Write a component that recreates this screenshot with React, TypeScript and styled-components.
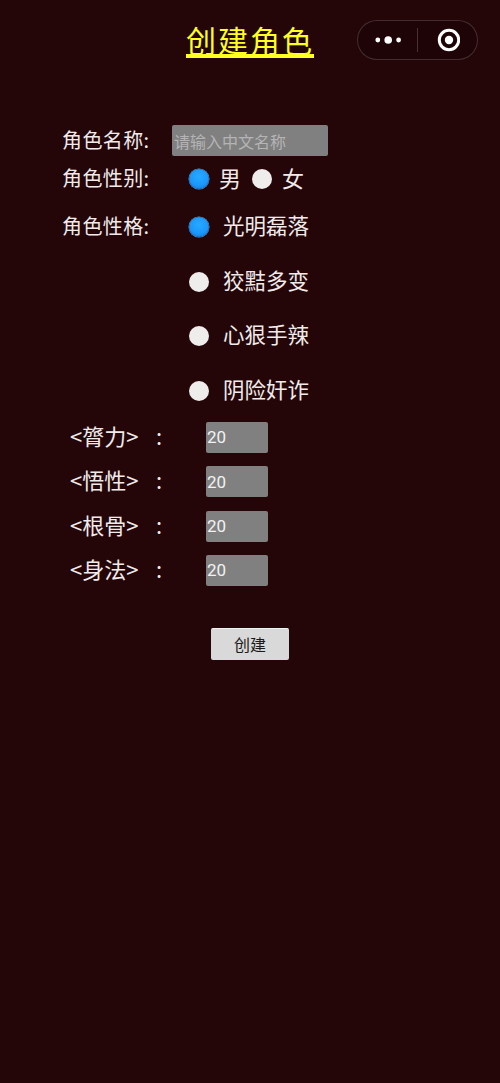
import React from "react";
import styled, { createGlobalStyle } from "styled-components";

const Global = createGlobalStyle`
  html, body { margin: 0; padding: 0; background: #240508; }
  * { box-sizing: border-box; }
  #root { font-family: "Noto Sans CJK SC", "Noto Sans", sans-serif; }
`;

const Page = styled.div`
  position: relative;
  width: 500px;
  height: 1083px;
  background: #240508;
  color: #f0ebea;
  overflow: hidden;
`;

const Title = styled.h1`
  margin: 0;
  height: 125px;
  padding-top: 16px;
  text-align: center;
  font-size: 30px;
  letter-spacing: 2px;
  line-height: 46px;
  font-weight: 400;
  color: #ffff22;
  text-decoration: underline;
  text-decoration-thickness: 4px;
  text-underline-offset: 2px;
`;

const Capsule = styled.div`
  position: absolute;
  top: 20px;
  left: 357px;
  width: 121px;
  height: 40px;
  border-radius: 20px;
  border: 1px solid rgba(255, 255, 255, 0.16);
  background: rgba(0, 0, 0, 0.12);
  display: flex;
  align-items: center;
`;

const CapsuleCell = styled.div`
  flex: 1;
  display: flex;
  align-items: center;
  justify-content: center;
`;

const CapsuleDivider = styled.div`
  width: 1px;
  height: 24px;
  background: rgba(255, 255, 255, 0.18);
`;

const Form = styled.form`
  display: flex;
  flex-direction: column;
  padding-left: 62px;
`;

const Row = styled.div<{ $top?: number; $height?: number }>`
  display: flex;
  align-items: center;
  height: ${(p) => p.$height ?? 32}px;
  margin-top: ${(p) => p.$top ?? 0}px;
`;

const FieldLabel = styled.label`
  width: 110px;
  flex: none;
  font-size: 20px;
  letter-spacing: 0.4px;
  line-height: 26px;
  padding-bottom: 2px;
  white-space: nowrap;
`;

const NameInput = styled.input`
  width: 156px;
  height: 31px;
  border: 0;
  border-radius: 2px;
  background: #808080;
  color: #fff;
  padding: 0 2px;
  font: 400 16px "Noto Sans CJK SC", sans-serif;
  &::placeholder { color: #b4b4b4; opacity: 1; }
`;

const Radio = styled.input.attrs({ type: "radio" })`
  appearance: none;
  flex: none;
  width: 20px;
  height: 20px;
  margin: 0;
  border-radius: 50%;
  background: #efecec;
  &:checked {
    background: radial-gradient(circle at 50% 38%, #27a9ff 0%, #1b98fb 55%, #0d78dc 88%, #3c8fc9 100%);
    box-shadow: 0 0 0 0.5px #4f9ed4;
  }
`;

const GenderGroup = styled.div`
  display: flex;
  align-items: center;
  margin-left: 17px;
`;

const GenderText = styled.span<{ $gap: number }>`
  font-size: 22px;
  line-height: 28px;
  padding-bottom: 4px;
  margin-left: 10px;
  margin-right: ${(p) => p.$gap}px;
`;

const TraitOption = styled.label`
  display: flex;
  align-items: center;
  height: 32px;
  margin-left: 127px;
  font-size: 21.5px;
  gap: 14px;
  white-space: nowrap;
`;

const TraitText = styled.span`
  line-height: 28px;
  padding-bottom: 4px;
`;

const TraitRow = styled(Row)`
  & > ${TraitOption} { margin-left: 17px; }
`;

const Traits = styled.div`
  display: flex;
  flex-direction: column;
  gap: 22.6px;
  margin-top: 22.6px;
`;

const Stats = styled.div`
  display: flex;
  flex-direction: column;
  gap: 13.4px;
  margin-top: 15px;
  padding-left: 8px;
`;

const StatRow = styled.div`
  display: flex;
  align-items: center;
  height: 31px;
`;

const StatName = styled.span`
  width: 86px;
  font-size: 22px;
  line-height: 27px;
  padding-bottom: 4px;
  white-space: nowrap;
`;

const StatColon = styled.span`
  width: 50px;
  font-size: 22px;
  line-height: 27px;
  padding-bottom: 4px;
`;

const StatInput = styled.input`
  width: 62px;
  height: 31px;
  border: 0;
  border-radius: 2px;
  background: #808080;
  color: #f2f2f2;
  padding: 0 1px;
  font: 400 17px "Roboto", "Noto Sans", sans-serif;
`;

const CreateButton = styled.button`
  display: block;
  width: 78px;
  height: 32px;
  margin: 42px 0 0 149px;
  padding: 0;
  border: 0;
  border-top: 1px solid #f2f2f2;
  border-radius: 2px;
  background: #d9d9d9;
  color: #1a1a1a;
  font: 400 16px "Noto Sans CJK SC", sans-serif;
`;

const stats = ["膂力", "悟性", "根骨", "身法"];
const traits = ["狡黠多变", "心狠手辣", "阴险奸诈"];

export default function App() {
  return (
    <Page>
      <Global />
      <Title>创建角色</Title>
      <Capsule>
        <CapsuleCell>
          <svg width="26" height="10" viewBox="0 0 26 10" fill="#fff">
            <circle cx="2.8" cy="5" r="2.4" />
            <circle cx="13.2" cy="5" r="3.8" />
            <circle cx="23.6" cy="5" r="2.4" />
          </svg>
        </CapsuleCell>
        <CapsuleDivider />
        <CapsuleCell>
          <svg width="24" height="24" viewBox="0 0 24 24">
            <circle cx="13" cy="12" r="9.7" fill="none" stroke="#fff" strokeWidth="3" />
            <circle cx="13" cy="12" r="4.2" fill="#fff" />
          </svg>
        </CapsuleCell>
      </Capsule>
      <Form onSubmit={(e) => e.preventDefault()}>
        <Row $height={31}>
          <FieldLabel>角色名称:</FieldLabel>
          <NameInput placeholder="请输入中文名称" />
        </Row>
        <Row $top={7}>
          <FieldLabel>角色性别:</FieldLabel>
          <GenderGroup>
            <Radio name="gender" defaultChecked />
            <GenderText $gap={11}>男</GenderText>
            <Radio name="gender" />
            <GenderText $gap={0}>女</GenderText>
          </GenderGroup>
        </Row>
        <TraitRow $top={16}>
          <FieldLabel>角色性格:</FieldLabel>
          <TraitOption>
            <Radio name="trait" defaultChecked />
            <TraitText>光明磊落</TraitText>
          </TraitOption>
        </TraitRow>
        <Traits>
          {traits.map((t) => (
            <TraitOption key={t}>
              <Radio name="trait" />
              <TraitText>{t}</TraitText>
            </TraitOption>
          ))}
        </Traits>
        <Stats>
          {stats.map((s) => (
            <StatRow key={s}>
              <StatName>{`<${s}>`}</StatName>
              <StatColon>:</StatColon>
              <StatInput defaultValue="20" />
            </StatRow>
          ))}
        </Stats>
        <CreateButton type="submit">创建</CreateButton>
      </Form>
    </Page>
  );
}
